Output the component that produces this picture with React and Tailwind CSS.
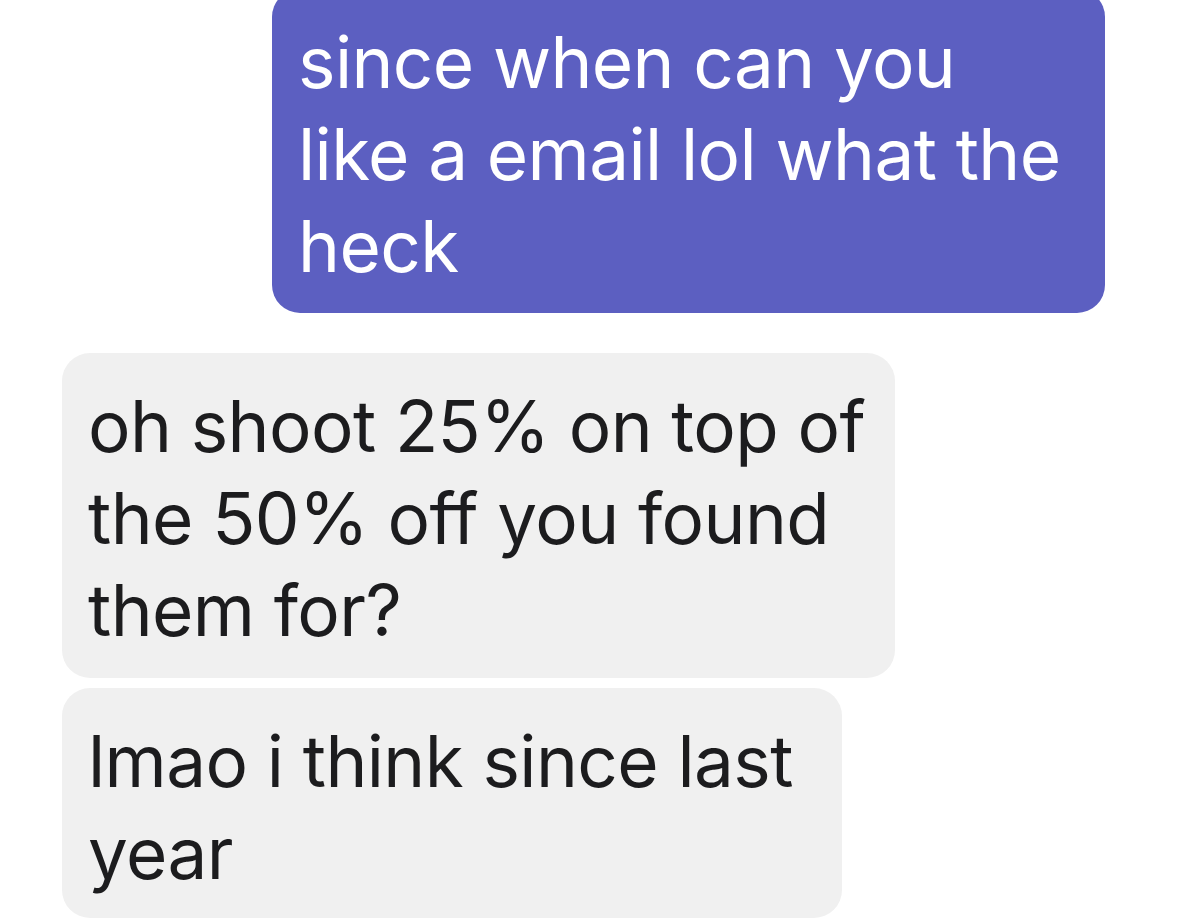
export default function App() {
  const font = { fontFamily: 'Inter, "Noto Sans", sans-serif' };
  return (
    <div className="w-[1179px] h-[921px] overflow-hidden bg-white" style={font}>
      <div className="flex flex-col mt-[-11px]">
        <div className="flex justify-end pr-[74px]">
          <div className="w-[833px] rounded-[28px] bg-[#5c5fc1] text-white px-[26px] pt-[27px] pb-[21px] text-[71px] leading-[92px] tracking-[-0.6px] whitespace-nowrap">
            since when can you<br />
            like a email lol what the<br />
            heck
          </div>
        </div>
        <div className="flex flex-col items-start pl-[62px] mt-[40px] gap-[10px]">
          <div className="w-[833px] rounded-[28px] bg-[#f0f0f0] text-[#1c1c1e] px-[26px] pt-[27px] pb-[22px] text-[71px] leading-[92px] tracking-[-0.6px] whitespace-nowrap">
            oh shoot 25% on top of<br />
            the 50% off you found<br />
            them for?
          </div>
          <div className="w-[780px] rounded-[28px] bg-[#f0f0f0] text-[#1c1c1e] px-[26px] pt-[27px] pb-[19px] text-[71px] leading-[92px] tracking-[-0.6px] whitespace-nowrap">
            lmao i think since last<br />
            year
          </div>
        </div>
      </div>
    </div>
  );
}
